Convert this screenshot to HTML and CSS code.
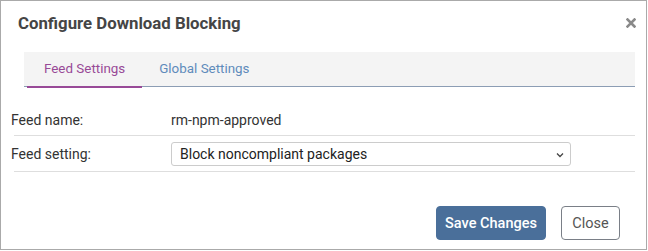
FILE: index.html
```html
<!DOCTYPE html>
<html lang="en">
<head>
    <meta charset="UTF-8">
    <meta name="viewport" content="width=device-width, initial-scale=1.0">
    <title>Configure Download Blocking</title>
    <link rel="stylesheet" href="styles.css">
</head>
<body>
    <div class="dialog">
        <div class="dialog-header">
            <h1 class="dialog-title">Configure Download Blocking</h1>
            <button class="close-x" title="Close">
                <svg width="10" height="10" viewBox="0 0 10 10">
                    <path d="M1.5 1.5 L8.5 8.5 M8.5 1.5 L1.5 8.5" stroke="#8a8a8a" stroke-width="2.6" stroke-linecap="square"/>
                </svg>
            </button>
        </div>

        <div class="tabs">
            <a class="tab active">Feed Settings</a>
            <a class="tab">Global Settings</a>
        </div>

        <div class="form">
            <div class="row row-name">
                <span class="label">Feed name:</span>
                <span class="value">rm-npm-approved</span>
            </div>
            <div class="row row-setting">
                <span class="label">Feed setting:</span>
                <div class="select-wrap">
                    <select class="select">
                        <option>Block noncompliant packages</option>
                    </select>
                    <svg class="chevron" width="8" height="6" viewBox="0 0 8 6">
                        <path d="M1 1.5 L4 4.5 L7 1.5" fill="none" stroke="#444" stroke-width="1.3"/>
                    </svg>
                </div>
            </div>
        </div>

        <div class="dialog-footer">
            <button class="btn btn-primary">Save Changes</button>
            <button class="btn btn-default">Close</button>
        </div>
    </div>
</body>
</html>
```

FILE: styles.css
```css
body {
    margin: 0;
    background: white;
    font-family: Roboto, "Liberation Sans", Arial, sans-serif;
    color: #333;
}
.dialog {
    width: 647px;
    height: 250px;
    box-sizing: border-box;
    border: 1px solid #aaa;
    background: white;
}
.dialog-header {
    display: flex;
    justify-content: space-between;
    align-items: flex-start;
    height: 51px;
    padding: 0 10px 0 17px;
    box-sizing: border-box;
}
.dialog-title {
    margin: 10px 0 0;
    font-size: 16.8px;
    line-height: 24px;
    font-weight: bold;
    color: #454545;
}
.close-x {
    margin-top: 17px;
    padding: 0;
    border: none;
    background: none;
    cursor: pointer;
    line-height: 0;
}
.tabs {
    display: flex;
    height: 34px;
    margin: 0 11px 0 23px;
    padding-left: 3px;
    background: #f4f4f4;
    border-bottom: 1px solid #8c9db4;
}
.tab {
    padding: 0 17px;
    line-height: 34px;
    font-size: 13.4px;
    color: #5f8bbb;
    cursor: pointer;
}
.tab.active {
    color: #984a97;
    border-bottom: 2px solid #984a97;
    margin-bottom: -2px;
}
.form {
    padding: 17px 11px 0 13px;
}
.row {
    display: grid;
    grid-template-columns: 157px 400px;
    align-items: center;
    border-bottom: 1px solid #dedede;
    font-size: 14px;
}
.row-name {
    height: 31px;
}
.row-setting {
    height: 35px;
}
.label {
    margin-left: -3px;
    color: #333;
}
.value {
    color: #333;
}
.select-wrap {
    position: relative;
}
.select {
    appearance: none;
    -webkit-appearance: none;
    display: block;
    width: 400px;
    height: 24px;
    padding: 0 0 0 8px;
    border: 1px solid #ccc;
    border-radius: 3px;
    background: white;
    font-family: Roboto, "Liberation Sans", Arial, sans-serif;
    font-size: 14px;
    color: #222;
}
.chevron {
    position: absolute;
    right: 7px;
    top: 10px;
}
.dialog-footer {
    display: flex;
    justify-content: flex-end;
    gap: 15px;
    padding: 34px 26px 0 0;
}
.btn {
    height: 34px;
    border-radius: 4px;
    font-family: Roboto, "Liberation Sans", Arial, sans-serif;
    font-size: 14.5px;
    cursor: pointer;
}
.btn-primary {
    width: 110px;
    background: #4a6f9a;
    border: 1px solid #4a6f9a;
    color: white;
    font-weight: 500;
}
.btn-default {
    width: 59px;
    background: white;
    border: 1px solid #7a7f87;
    color: #555;
}
```
